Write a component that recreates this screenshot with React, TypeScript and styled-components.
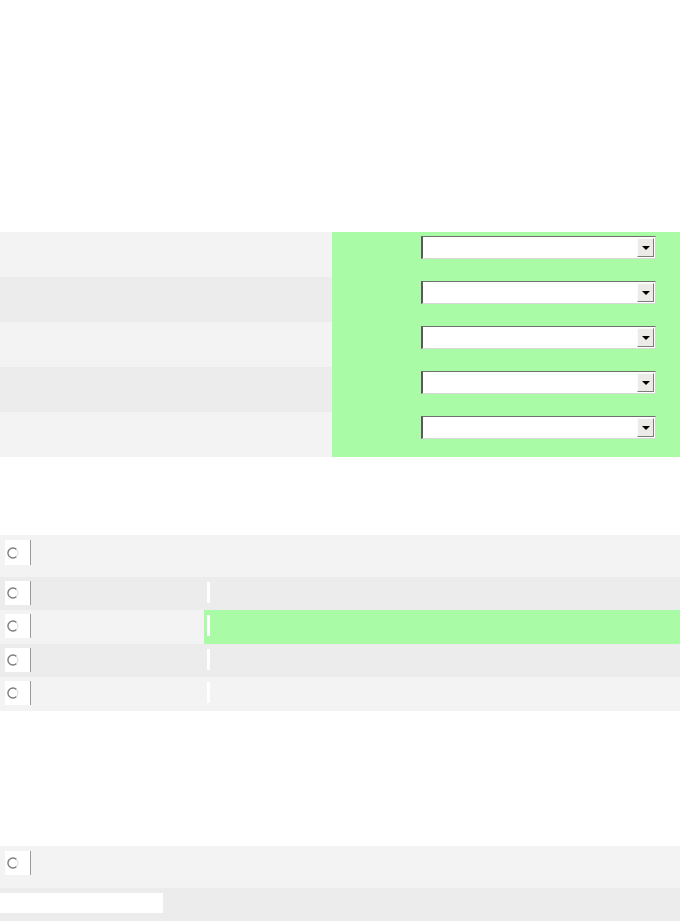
import { createGlobalStyle } from 'styled-components'
import styled from 'styled-components'

const GlobalStyle = createGlobalStyle`
  html, body {
    margin: 0;
    padding: 0;
    background: #fff;
    font-family: "Liberation Sans", Arial, sans-serif;
  }
`

const LIGHT = '#f3f3f3'
const DARK = '#ececec'
const GREEN = '#a9fba6'

const Page = styled.div`
  display: flex;
  flex-direction: column;
  padding-top: 232px;
`

const FilterTable = styled.div`
  display: grid;
  grid-template-columns: 332px 1fr;
`

const LabelColumn = styled.div`
  display: flex;
  flex-direction: column;
`

const LabelRow = styled.div<{ $bg: string }>`
  height: 45px;
  background: ${(p) => p.$bg};
`

const SelectColumn = styled.div`
  display: flex;
  flex-direction: column;
  background: ${GREEN};
`

const SelectRow = styled.div`
  height: 45px;
  box-sizing: border-box;
  padding: 4px 0 0 89px;
`

const SelectBox = styled.div`
  width: 235px;
  height: 23px;
  box-sizing: border-box;
  display: flex;
  justify-content: flex-end;
  align-items: stretch;
  padding: 1px;
  background: #fff;
  border-style: solid;
  border-width: 1px 1px 1px 2px;
  border-color: #6f6f6f #d8d8d8 #d8d8d8 #5a5a5a;
`

const DropButton = styled.div`
  width: 15px;
  display: flex;
  align-items: center;
  justify-content: center;
  background: #ecebe8;
  border: 1px solid;
  border-color: #fafafa #7d7d7d #7d7d7d #fafafa;
`

const Arrow = styled.span`
  width: 0;
  height: 0;
  border-left: 4px solid transparent;
  border-right: 4px solid transparent;
  border-top: 4px solid #000;
  margin-top: 1px;
`

const Section = styled.div<{ $gap: number }>`
  display: flex;
  flex-direction: column;
  margin-top: ${(p) => p.$gap}px;
`

const OptionRow = styled.div<{ $h: number; $bg: string }>`
  display: grid;
  grid-template-columns: 204px 1fr;
  height: ${(p) => p.$h}px;
  background: ${(p) => p.$bg};
`

const LabelCell = styled.div<{ $top: number }>`
  padding: ${(p) => p.$top}px 0 0 5px;
`

const ValueCell = styled.div<{ $green?: boolean }>`
  padding: 5px 0 0 3px;
  background: ${(p) => (p.$green ? GREEN : 'transparent')};
`

const Tick = styled.div`
  width: 3px;
  height: 21px;
  background: #fff;
`

const RadioBox = styled.div<{ $h: number }>`
  width: 26px;
  height: ${(p) => p.$h}px;
  box-sizing: border-box;
  display: flex;
  align-items: center;
  padding-left: 2px;
  background: #fff;
  border-right: 1px solid #9a9a9a;
`

const FooterRow = styled.div<{ $h: number; $bg: string }>`
  height: ${(p) => p.$h}px;
  box-sizing: border-box;
  padding: 5px 0 0 5px;
  background: ${(p) => p.$bg};
`

const BlankField = styled.div`
  width: 163px;
  height: 20px;
  margin-left: -5px;
  background: #fff;
`

function Radio({ h }: { h: number }) {
  return (
    <RadioBox $h={h}>
      <svg width="12" height="12" viewBox="0 0 12 12">
        <path d="M9.5 2.5 A5 5 0 1 0 9.5 9.5" fill="none" stroke="#7c7c7c" strokeWidth="1.4" />
        <path d="M9.5 9.5 A5 5 0 0 0 9.5 2.5" fill="none" stroke="#e2e2e2" strokeWidth="1.2" />
      </svg>
    </RadioBox>
  )
}

const filterRows = [LIGHT, DARK, LIGHT, DARK, LIGHT]

const options = [
  { h: 42, bg: LIGHT, top: 5, box: 25, tick: false, green: false },
  { h: 33, bg: DARK, top: 4, box: 24, tick: true, green: false },
  { h: 34, bg: LIGHT, top: 4, box: 24, tick: true, green: true },
  { h: 33, bg: DARK, top: 4, box: 24, tick: true, green: false },
  { h: 34, bg: LIGHT, top: 4, box: 24, tick: true, green: false },
]

export default function App() {
  return (
    <Page>
      <GlobalStyle />
      <FilterTable>
        <LabelColumn>
          {filterRows.map((bg, i) => (
            <LabelRow key={i} $bg={bg} />
          ))}
        </LabelColumn>
        <SelectColumn>
          {filterRows.map((_, i) => (
            <SelectRow key={i}>
              <SelectBox>
                <DropButton>
                  <Arrow />
                </DropButton>
              </SelectBox>
            </SelectRow>
          ))}
        </SelectColumn>
      </FilterTable>

      <Section $gap={78}>
        {options.map((o, i) => (
          <OptionRow key={i} $h={o.h} $bg={o.bg}>
            <LabelCell $top={o.top}>
              <Radio h={o.box} />
            </LabelCell>
            <ValueCell $green={o.green}>{o.tick && <Tick />}</ValueCell>
          </OptionRow>
        ))}
      </Section>

      <Section $gap={135}>
        <FooterRow $h={42} $bg={LIGHT}>
          <Radio h={24} />
        </FooterRow>
        <FooterRow $h={33} $bg={DARK}>
          <BlankField />
        </FooterRow>
      </Section>
    </Page>
  )
}
